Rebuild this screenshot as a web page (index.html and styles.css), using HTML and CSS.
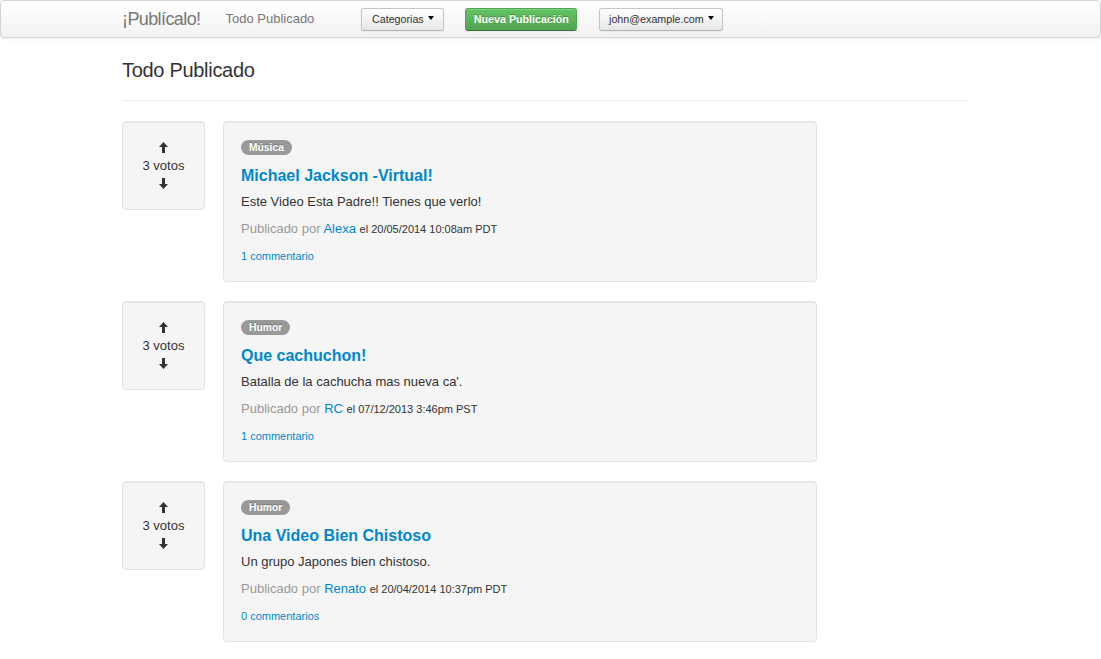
FILE: index.html
```html
<!DOCTYPE html>
<html lang="es">
<head>
<meta charset="utf-8">
<title>¡Publícalo!</title>
<link rel="stylesheet" href="styles.css">
</head>
<body>
<div class="navbar">
  <div class="nav-inner">
    <a class="brand" href="#">¡Publícalo!</a>
    <a class="nav-link" href="#">Todo Publicado</a>
    <button class="btn btn-cat">Categorias <span class="caret"></span></button>
    <button class="btn btn-success">Nueva Publicación</button>
    <button class="btn btn-user">john@example.com <span class="caret"></span></button>
  </div>
</div>

<div class="container">
  <h3 class="page-title">Todo Publicado</h3>
  <hr class="divider">

  <div class="post">
    <div class="votes">
      <svg class="arrow" viewBox="0 0 9 11"><path d="M4.5 0 L9 5 H6 V11 H3 V5 H0 Z"/></svg>
      <span class="count">3 votos</span>
      <svg class="arrow" viewBox="0 0 9 11"><path d="M4.5 11 L9 6 H6 V0 H3 V6 H0 Z"/></svg>
    </div>
    <div class="card">
      <span class="badge">Música</span>
      <h4 class="title"><a href="#">Michael Jackson -Virtual!</a></h4>
      <p class="desc">Este Video Esta Padre!! Tienes que verlo!</p>
      <p class="meta">Publicado por <a href="#">Alexa</a> <small>el 20/05/2014 10:08am PDT</small></p>
      <p class="comments"><a href="#">1 commentario</a></p>
    </div>
  </div>

  <div class="post">
    <div class="votes">
      <svg class="arrow" viewBox="0 0 9 11"><path d="M4.5 0 L9 5 H6 V11 H3 V5 H0 Z"/></svg>
      <span class="count">3 votos</span>
      <svg class="arrow" viewBox="0 0 9 11"><path d="M4.5 11 L9 6 H6 V0 H3 V6 H0 Z"/></svg>
    </div>
    <div class="card">
      <span class="badge">Humor</span>
      <h4 class="title"><a href="#">Que cachuchon!</a></h4>
      <p class="desc">Batalla de la cachucha mas nueva ca'.</p>
      <p class="meta">Publicado por <a href="#">RC</a> <small>el 07/12/2013 3:46pm PST</small></p>
      <p class="comments"><a href="#">1 commentario</a></p>
    </div>
  </div>

  <div class="post">
    <div class="votes">
      <svg class="arrow" viewBox="0 0 9 11"><path d="M4.5 0 L9 5 H6 V11 H3 V5 H0 Z"/></svg>
      <span class="count">3 votos</span>
      <svg class="arrow" viewBox="0 0 9 11"><path d="M4.5 11 L9 6 H6 V0 H3 V6 H0 Z"/></svg>
    </div>
    <div class="card">
      <span class="badge">Humor</span>
      <h4 class="title"><a href="#">Una Video Bien Chistoso</a></h4>
      <p class="desc">Un grupo Japones bien chistoso.</p>
      <p class="meta">Publicado por <a href="#">Renato</a> <small>el 20/04/2014 10:37pm PDT</small></p>
      <p class="comments"><a href="#">0 commentarios</a></p>
    </div>
  </div>
</div>
</body>
</html>
```

FILE: styles.css
```css
* { box-sizing: border-box; }
html, body { margin: 0; padding: 0; }
body {
  font-family: "Liberation Sans", Arial, Helvetica, sans-serif;
  font-size: 13px;
  line-height: 18px;
  color: #333;
  background: #fff;
}
a { color: #0088cc; text-decoration: none; }

.navbar {
  height: 38px;
  border: 1px solid #d4d4d4;
  border-radius: 4px;
  background: linear-gradient(to bottom, #ffffff, #f2f2f2);
  box-shadow: 0 1px 4px rgba(0,0,0,0.065);
}
.nav-inner {
  display: flex;
  align-items: center;
  height: 36px;
  padding-left: 121px;
}
.brand {
  color: #777;
  font-size: 18px;
  letter-spacing: -0.6px;
  line-height: 36px;
  margin-right: 25px;
}
.nav-link {
  color: #777;
  font-size: 13px;
  line-height: 36px;
  margin-right: 47px;
}
.btn {
  font-family: inherit;
  font-size: 10.7px;
  height: 23px;
  line-height: 16px;
  padding: 2px 9px;
  border-radius: 3px;
  cursor: pointer;
  color: #333;
  white-space: nowrap;
  border: 1px solid #c5c5c5;
  border-bottom-color: #b3b3b3;
  background: linear-gradient(to bottom, #ffffff, #e6e6e6);
  box-shadow: inset 0 1px 0 rgba(255,255,255,0.2), 0 1px 2px rgba(0,0,0,0.05);
  display: inline-flex;
  align-items: center;
  justify-content: center;
  gap: 4px;
}
.btn-cat { width: 83px; margin-right: 21px; }
.btn-success {
  width: 112px;
  padding: 2px 4px;
  margin-right: 22px;
  color: #fff;
  font-weight: bold;
  text-shadow: 0 -1px 0 rgba(0,0,0,0.25);
  background: linear-gradient(to bottom, #62c462, #51a351);
  border-color: #51a351 #51a351 #387038;
}
.btn-user { width: 124px; }
.caret {
  display: inline-block;
  width: 0;
  height: 0;
  border-top: 4px solid #000;
  border-left: 3.5px solid transparent;
  border-right: 3.5px solid transparent;
  margin-top: -2px;
}

.container {
  width: 846px;
  margin-left: 122px;
}
.page-title {
  margin: 0;
  padding-top: 19px;
  font-size: 20px;
  letter-spacing: -0.3px;
  font-weight: normal;
  line-height: 26px;
  color: #333;
}
.divider {
  margin: 17px 0 20px;
  border: 0;
  border-top: 1px solid #eee;
  height: 0;
}

.post {
  display: flex;
  align-items: flex-start;
  gap: 18px;
  margin-bottom: 19px;
}
.votes {
  width: 83px;
  height: 89px;
  background: #f5f5f5;
  border: 1px solid #e3e3e3;
  border-radius: 4px;
  box-shadow: inset 0 1px 1px rgba(0,0,0,0.05);
  display: flex;
  flex-direction: column;
  align-items: center;
  padding-top: 20px;
}
.arrow {
  width: 9px;
  height: 11px;
  fill: #333;
  flex: none;
}
.count {
  display: block;
  line-height: 18px;
  margin: 4px 0 3px;
  color: #333;
}
.card {
  width: 594px;
  background: #f5f5f5;
  border: 1px solid #e3e3e3;
  border-radius: 4px;
  box-shadow: inset 0 1px 1px rgba(0,0,0,0.05);
  padding: 18px 17px 16px;
}
.badge {
  display: block;
  width: fit-content;
  height: 15px;
  line-height: 15px;
  padding: 0 8px;
  border-radius: 8px;
  background: #999;
  color: #fff;
  font-weight: bold;
  font-size: 10.3px;
  text-shadow: 0 -1px 0 rgba(0,0,0,0.25);
}
.title {
  margin: 11px 0 0;
  font-size: 16px;
  line-height: 20px;
  font-weight: bold;
}
.desc {
  margin: 7px 0 0;
  line-height: 18px;
}
.meta {
  margin: 9px 0 0;
  line-height: 18px;
  color: #999;
}
.meta small {
  font-size: 11px;
  color: #333;
}
.comments {
  margin: 9px 0 0;
  line-height: 18px;
  font-size: 11px;
}
```
